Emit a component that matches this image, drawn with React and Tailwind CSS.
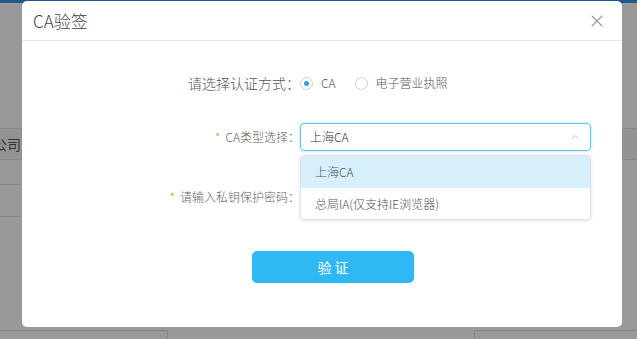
import { ChevronUp, X } from 'lucide-react';

const font = { fontFamily: '"Noto Sans CJK SC", "Liberation Sans", sans-serif' };

function Radio({ checked, label }) {
  return (
    <label className="flex items-center">
      <span className="w-[13px] h-[13px] rounded-full border border-[#cfcfcf] bg-white flex items-center justify-center">
        {checked && <span className="w-[5px] h-[5px] rounded-full bg-[#2ba6e8]" />}
      </span>
      <span className="ml-[8px] text-[12px] text-[#555]">{label}</span>
    </label>
  );
}

function Backdrop() {
  return (
    <div className="w-[637px] h-[339px] flex flex-col bg-[#999] font-normal">
      <div className="h-[3px] bg-[#1e5a85]" />
      <div className="h-[125px]" />
      <div className="h-[32px] flex justify-between border-y border-[#858585] bg-[#939393]">
        <div className="w-[21px] overflow-hidden flex justify-end items-center">
          <span className="whitespace-nowrap text-[14px] text-[#333]">公司</span>
        </div>
      </div>
      <div className="w-[300px] h-[25px] border-b border-[#858585]" />
      <div className="w-[300px] h-[32px] border-b border-[#858585]" />
      <div className="flex-1" />
      <div className="h-[9px] flex">
        <div className="w-[168px] border-t border-r border-[#858585] rounded-tr-[3px]" />
        <div className="w-[306px]" />
        <div className="flex-1 border-t border-l border-[#858585] rounded-tl-[3px]" />
      </div>
    </div>
  );
}

export default function App() {
  return (
    <div className="relative w-[637px] h-[339px] overflow-hidden" style={font}>
      <Backdrop />

      <div className="absolute left-[22px] top-[1px] w-[600px] h-[326px] bg-white rounded-[5px] flex flex-col font-light">
        <div className="h-[40px] flex items-center justify-between pl-[11px] pr-[15px] border-b border-[#e6e6e6]">
          <span className="text-[17px] text-[#444]">CA验签</span>
          <X className="w-[20px] h-[20px] text-[#999]" strokeWidth={1.3} />
        </div>

        <div className="flex flex-col">
          <div className="flex items-center mt-[33px] h-[18px]">
            <div className="w-[278px] text-right text-[14px] text-[#555]">请选择认证方式：</div>
            <Radio checked label="CA" />
            <div className="w-[19px]" />
            <Radio label="电子营业执照" />
          </div>

          <div className="flex items-center mt-[31px]">
            <div className="w-[278px] text-right text-[12px] text-[#666]">
              <span className="text-[#f08a24] mr-[5px]">*</span>CA类型选择：
            </div>
            <div className="relative w-[291px]">
              <div className="h-[28px] flex items-center justify-between px-[9px] border border-[#5fc6f1] rounded-[4px] shadow-[0_0_3px_rgba(47,180,240,0.45)]">
                <span className="text-[12px] text-[#333]">上海CA</span>
                <ChevronUp className="w-[12px] h-[12px] text-[#aaa]" strokeWidth={1.5} />
              </div>
              <div className="absolute left-0 top-[32px] w-[291px] bg-white border border-[#e2e2e2] rounded-[4px] shadow-[0_1px_4px_rgba(0,0,0,0.12)] overflow-hidden z-10">
                <div className="h-[32px] flex items-center pl-[14px] bg-[#d6effb] text-[12px] text-[#555]">上海CA</div>
                <div className="h-[31px] flex items-center pl-[14px] text-[12px] text-[#555]">总局IA(仅支持IE浏览器)</div>
              </div>
            </div>
          </div>

          <div className="flex items-center mt-[32px] h-[28px]">
            <div className="w-[278px] text-right text-[12px] text-[#666]">
              <span className="text-[#f08a24] mr-[5px]">*</span>请输入私钥保护密码：
            </div>
            <div className="w-[291px] h-[28px] border border-[#ddd] rounded-[4px]" />
          </div>

          <div className="flex mt-[40px] pl-[230px]">
            <button className="w-[162px] h-[32px] rounded-[5px] bg-[#2fb8f3] text-white text-[14px] font-normal">
              验 证
            </button>
          </div>
        </div>
      </div>
    </div>
  );
}
